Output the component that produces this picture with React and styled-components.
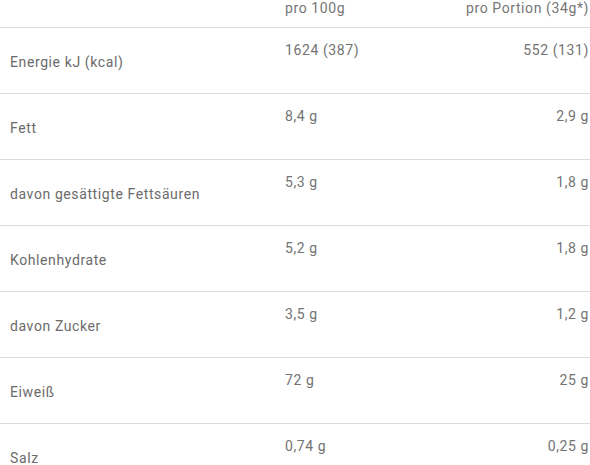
import React from 'react';
import styled, { createGlobalStyle } from 'styled-components';

const GlobalStyle = createGlobalStyle`
  html, body {
    margin: 0;
    padding: 0;
    background: #ffffff;
  }
  body {
    font-family: "Roboto", "Liberation Sans", sans-serif;
    letter-spacing: 0.6px;
  }
`;

const rows = [
  { label: 'Energie kJ (kcal)', per100: '1624 (387)', portion: '552 (131)' },
  { label: 'Fett', per100: '8,4 g', portion: '2,9 g' },
  { label: 'davon gesättigte Fettsäuren', per100: '5,3 g', portion: '1,8 g' },
  { label: 'Kohlenhydrate', per100: '5,2 g', portion: '1,8 g' },
  { label: 'davon Zucker', per100: '3,5 g', portion: '1,2 g' },
  { label: 'Eiweiß', per100: '72 g', portion: '25 g' },
  { label: 'Salz', per100: '0,74 g', portion: '0,25 g' },
];

const App = () => {
  return (
    <>
      <GlobalStyle />
      <Table>
        <HeadRow>
          <HeadCell />
          <HeadCell>pro 100g</HeadCell>
          <HeadCell $right>pro Portion (34g*)</HeadCell>
        </HeadRow>
        {rows.map((row) => (
          <Row key={row.label}>
            <Label>{row.label}</Label>
            <Value>{row.per100}</Value>
            <Value $right>{row.portion}</Value>
          </Row>
        ))}
      </Table>
    </>
  );
};

export default App;

const Table = styled.div`
  width: 590px;
  display: flex;
  flex-direction: column;
`;

const HeadRow = styled.div`
  display: grid;
  grid-template-columns: 285px 1fr 1fr;
  height: 28px;
  border-bottom: 1px solid #dcdcdc;
  box-sizing: border-box;
`;

const HeadCell = styled.div`
  font-size: 14px;
  line-height: 16px;
  color: #767676;
  text-align: ${(p) => (p.$right ? 'right' : 'left')};
  padding-right: ${(p) => (p.$right ? '1px' : '0')};
`;

const Row = styled.div`
  display: grid;
  grid-template-columns: 285px 1fr 1fr;
  height: 66px;
  border-bottom: 1px solid #dcdcdc;
  box-sizing: border-box;
`;

const Label = styled.div`
  align-self: center;
  padding-left: 10px;
  padding-top: 2px;
  font-size: 14px;
  color: #6b6b6b;
`;

const Value = styled.div`
  padding-top: 14px;
  font-size: 14px;
  line-height: 16px;
  color: #737373;
  text-align: ${(p) => (p.$right ? 'right' : 'left')};
  padding-right: ${(p) => (p.$right ? '1px' : '0')};
`;
